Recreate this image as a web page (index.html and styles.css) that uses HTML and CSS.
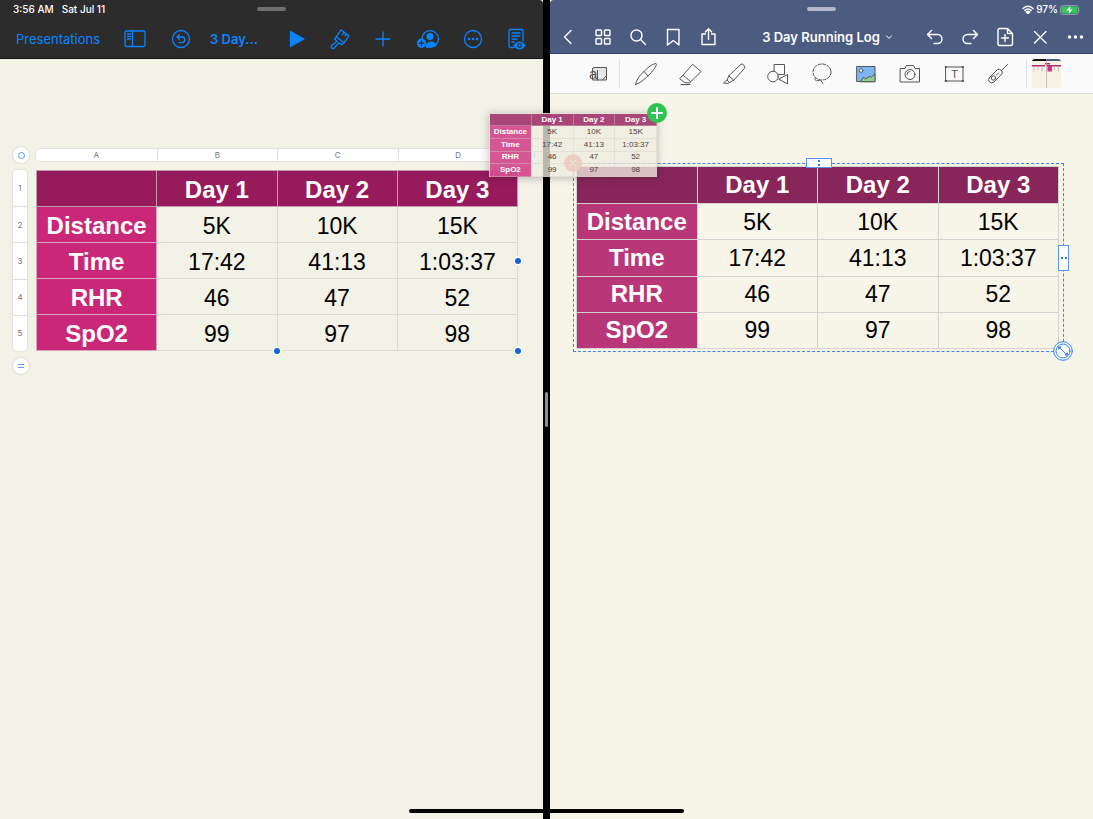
FILE: index.html
```html
<!DOCTYPE html>
<html lang="en">
<head>
    <meta charset="UTF-8">
    <meta name="viewport" content="width=device-width, initial-scale=1.0">
    <title>3 Day Running Log</title>
    <link rel="stylesheet" href="styles.css">
</head>
<body>
    <div class="screen">
        <!-- Presentation app -->
        <section class="pane keynote">
            <header class="keynote-header">
                <div class="status">
                    <span>3:56 AM</span>
                    <span>Sat Jul 11</span>
                    <i class="grabber"></i>
                </div>
                <div class="keynote-bar">
                    <div class="group">
                        <button class="label">Presentations</button>
                        <button aria-label="Sidebar"><svg viewBox="0 0 22 22"><rect x="1" y="3" width="20" height="15.500" rx="1.500"/><path d="M8.500 3v15.500M3.500 6h3M3.500 8.500h3M3.500 11h3"/></svg></button>
                        <button aria-label="Undo"><svg viewBox="0 0 22 22"><circle cx="11" cy="11" r="8.500"/><path d="M9.500 6.500L7 9l2.500 2.500M7 9h5a2.800 2.800 0 0 1 0 5.600H9"/></svg></button>
                    </div>
                    <button class="label doc-name">3 Day...</button>
                    <div class="group tools">
                        <button aria-label="Play"><svg viewBox="0 0 22 22"><path class="solid" d="M5.500 3.500v15L19 11z"/></svg></button>
                        <button aria-label="Format"><svg viewBox="0 0 22 22"><path d="M12 1.800l7.800 6-4.800 7-7.800-6zM7.200 8.800l-1.700 2 2.500 2.500-5.300 4.200a1.700 1.700 0 0 0 2.500 2.500l4.800-5.300 2.700 2 2.300-1.900M15 4.200l-1.800 2.500M17.300 6l-1.300 1.800"/></svg></button>
                        <button aria-label="Insert"><svg viewBox="0 0 22 22"><path d="M10 4v14M3 11h14"/></svg></button>
                        <button aria-label="Collaborate"><svg viewBox="0 0 22 22"><path d="M5 10.500a8.200 8.200 0 1 1 9 8.500H9.500"/><circle class="solid" cx="13" cy="8.500" r="2.900"/><path class="solid" d="M9.500 18.500c-1-5 9-6 9.500-1.200-2 1.600-5 2-9.500 1.200z"/><circle class="solid" cx="4.500" cy="15.200" r="4"/><path class="cut" d="M4.500 13v4.400M2.300 15.200h4.400"/></svg></button>
                        <button aria-label="More"><svg viewBox="0 0 22 22"><circle cx="12" cy="11" r="8.500"/><circle class="solid" cx="8" cy="11" r=".7"/><circle class="solid" cx="12" cy="11" r=".7"/><circle class="solid" cx="16" cy="11" r=".7"/></svg></button>
                        <button aria-label="Presenter notes"><svg viewBox="0 0 22 22"><path d="M9 19.500H5.500A1.500 1.500 0 0 1 4 18V3a1.500 1.500 0 0 1 1.500-1.500h11A1.500 1.500 0 0 1 18 3v10M7 5h8M7 8h8M7 11h5M7 14h2"/><path class="solid" d="M9 17.500q5-6.500 11 0-5.500 6.500-11 0z"/><circle class="cut" cx="14.500" cy="17.500" r="1.800"/></svg></button>
                    </div>
                </div>
            </header>
            <main class="slide">
                <button class="knob" aria-label="Select table"><i class="ring"></i></button>
                <div class="col-bar"><span>A</span><span>B</span><span>C</span><span>D</span></div>
                <button class="knob" aria-label="Add column"><i class="bars"></i></button>
                <div class="row-bar"><span>1</span><span>2</span><span>3</span><span>4</span><span>5</span></div>
                <div class="table-wrap">
                    <table class="log log-live">
                        <thead>
                            <tr><th></th><th>Day 1</th><th>Day 2</th><th>Day 3</th></tr>
                        </thead>
                        <tbody>
                            <tr><th>Distance</th><td>5K</td><td>10K</td><td>15K</td></tr>
                            <tr><th>Time</th><td>17:42</td><td>41:13</td><td>1:03:37</td></tr>
                            <tr><th>RHR</th><td>46</td><td>47</td><td>52</td></tr>
                            <tr><th>SpO2</th><td>99</td><td>97</td><td>98</td></tr>
                        </tbody>
                    </table>
                    <i class="dot dot-right"></i>
                    <i class="dot dot-bottom"></i>
                    <i class="dot dot-corner"></i>
                </div>
                <button class="knob knob-end" aria-label="Add row"><i class="bars bars-row"></i></button>
            </main>
        </section>

        <div class="divider"><i></i></div>

        <!-- Notes app -->
        <section class="pane notes">
            <header class="notes-header">
                <div class="status">
                    <i class="grabber"></i>
                    <div class="battery">
                        <svg class="wifi" viewBox="0 0 12 9"><path d="M1 3.500q5-4.500 10 0M2.800 5.400q3.200-2.800 6.400 0"/><path class="solid" d="M4.300 6.900q1.700-1.400 3.400 0L6 8.600z"/></svg>
                        <span>97%</span>
                        <svg class="cell" viewBox="0 0 21 10"><rect x=".5" y=".5" width="18" height="9" rx="2.500" fill="none" stroke="#8d97ae"/><rect x="1.500" y="1.500" width="16" height="7" rx="1.500" fill="#35c759"/><path d="M19.500 3.500q1.500 1.500 0 3z" fill="#8d97ae"/><path d="M10.500 1L6.500 5.500h2.700L8.500 9l4-4.600H9.800z" fill="#fff"/></svg>
                    </div>
                </div>
                <div class="notes-bar">
                    <div class="group">
                        <button aria-label="Back"><svg viewBox="0 0 20 20"><path d="M13 3.500L6.500 10l6.500 6.500"/></svg></button>
                        <button aria-label="Thumbnails"><svg viewBox="0 0 20 20"><rect x="3" y="3" width="5.500" height="5.500" rx=".8"/><rect x="11.500" y="3" width="5.500" height="5.500" rx=".8"/><rect x="3" y="11.500" width="5.500" height="5.500" rx=".8"/><rect x="11.500" y="11.500" width="5.500" height="5.500" rx=".8"/></svg></button>
                        <button aria-label="Search"><svg viewBox="0 0 20 20"><circle cx="8.500" cy="8.500" r="5.500"/><path d="M12.500 12.500l5 5"/></svg></button>
                        <button aria-label="Bookmark"><svg viewBox="0 0 20 20"><path d="M4.500 2.500h11.500v15.500l-5.700-4.500L4.500 18z"/></svg></button>
                        <button aria-label="Share"><svg viewBox="0 0 20 20"><path d="M7.500 7H4v10.500h13V7h-3.500M10.500 12.500V2M7.300 5l3.200-3.200L13.700 5"/></svg></button>
                    </div>
                    <button class="note-title">3 Day Running Log <svg viewBox="0 0 8 8"><path d="M1.500 3L4 5.300 6.500 3"/></svg></button>
                    <div class="group">
                        <button aria-label="Undo"><svg viewBox="0 0 20 20"><path d="M6.500 3.500L2.500 7.500l4 4M2.500 7.500h10a4.500 4.500 0 0 1 0 9H9"/></svg></button>
                        <button aria-label="Redo"><svg viewBox="0 0 20 20"><path d="M13.500 3.500l4 4-4 4M17.500 7.500h-10a4.500 4.500 0 0 0 0 9H11"/></svg></button>
                        <button aria-label="Add page"><svg viewBox="0 0 20 20"><path d="M4.500 1.500h8l5 5V17a1.500 1.500 0 0 1-1.500 1.500H4.500A1.500 1.500 0 0 1 3 17V3a1.500 1.500 0 0 1 1.500-1.500zM12.500 1.500v5h5M10 7.500v7M6.500 11h7"/></svg></button>
                        <button aria-label="Close editing"><svg viewBox="0 0 20 20"><path d="M4.500 4.500l11.500 11.500M16 4.500l-5 5M9.500 11l-5 5"/></svg></button>
                        <button aria-label="More"><svg viewBox="0 0 20 20"><circle class="solid" cx="4.500" cy="10" r="1"/><circle class="solid" cx="10.500" cy="10" r="1"/><circle class="solid" cx="16.500" cy="10" r="1"/></svg></button>
                    </div>
                </div>
            </header>
            <div class="toolbar">
                <button aria-label="Zoom window"><svg viewBox="0 0 24 24"><path fill="#e6e6e8" d="M4.500 11V7a1.500 1.500 0 0 1 1.500-1.500h12.500V18H4.500v-1zM18.500 13.500l-4 4.500"/><path d="M9.500 8.500V18"/><text class="glyph" x="1" y="17">a</text></svg></button>
                <i class="rule"></i>
                <div class="tool-list">
                    <button aria-label="Pen"><svg viewBox="0 0 24 24"><path d="M1.500 22.500c1-5 4-9 8.500-13 4-4 8-7.500 12-8 1.500 1.500-2 6-6.500 11-4.500 4.500-9 8.500-14 10zM10 9.500l4 4.500"/></svg></button>
                    <button aria-label="Eraser"><svg viewBox="0 0 24 24"><path d="M15 2.500l8 7L11.500 21l-5-.5L2 17zM5.500 13.500l7 6M3 22.500h9"/></svg></button>
                    <button aria-label="Highlighter"><svg viewBox="0 0 24 24"><path d="M7 13.500L19 2.300q1.500-.8 3 1t.5 3L12 18zM7 13.500l-2 4.500 2.500 2.500L12 18M5 18l-3.500 3 4.500.5 1.500-1"/></svg></button>
                    <button aria-label="Shapes"><svg viewBox="0 0 24 24"><rect x="8.500" y="2.500" width="10" height="10"/><circle cx="7" cy="14.500" r="5.300" fill="#fafafa"/><path fill="#fafafa" d="M13 17l8.500-4.500v9z"/></svg></button>
                    <button aria-label="Lasso"><svg viewBox="0 0 24 24"><ellipse cx="12" cy="10" rx="9" ry="8" stroke-dasharray="3 1.500"/><path d="M5 16q-1 3 3 2.500t5 3.500" stroke-dasharray="3 1"/></svg></button>
                    <button aria-label="Image"><svg viewBox="0 0 24 24"><rect x="3" y="4.500" width="18" height="15" fill="#7fb5f7"/><path fill="#93cf92" d="M6.500 19.500l3-4.500 2 2 3.500-2.500 2.500.500L21 12v7.500z"/><circle cx="7" cy="8.500" r="1.800" fill="#fff"/></svg></button>
                    <button aria-label="Camera"><svg viewBox="0 0 24 24"><path d="M2.500 6.500H7l1.500-3h7l1.500 3h4.500V20h-19z"/><circle cx="12" cy="12.500" r="5"/><path d="M9 12.500a3 3 0 0 1 3-3"/></svg></button>
                    <button aria-label="Text"><svg viewBox="0 0 24 24"><rect x="4" y="5" width="17" height="14"/><path class="solid" d="M3.500 4.500h1v1h-1zM20.500 4.500h1v1h-1zM3.500 18.500h1v1h-1zM20.500 18.500h1v1h-1z"/><text class="glyph glyph-t" x="12.500" y="16">T</text></svg></button>
                    <button aria-label="Laser pointer"><svg viewBox="0 0 24 24"><path d="M3.500 15.500L11.500 7.500q2-1 3.700.7t.8 3.600L8 20Q5.500 22 3.500 20t0-4.500zM15.500 8.500L21.500 2.500"/><circle cx="7.500" cy="16" r="2.200"/><path d="M10.500 13l2-2"/></svg></button>
                </div>
                <i class="rule rule-end"></i>
                <button class="thumb" aria-label="Recent image"><svg viewBox="0 0 29 29"><path fill="#f5f2e3" d="M0 0h29v29H0z"/><path fill="#111" d="M0 0h14.500v2H0z"/><path fill="#4c5b80" d="M14.500 0H29v2H14.500z"/><path fill="#b52b70" d="M0 6h13v1.500H0zM15 6h14v1.500H15zM13 4h5v1.500h-5z"/><path fill="#d62c83" d="M15.500 7H20v5.500h-4.500z"/><path stroke="#aaa" stroke-width=".7" d="M14.500 2v27M2 8v4M6 8v3M10 8v4M22.500 8v3M26.500 8v4"/></svg></button>
            </div>
            <main class="page">
                <div class="selection">
                    <table class="log log-image">
                        <thead>
                            <tr><th></th><th>Day 1</th><th>Day 2</th><th>Day 3</th></tr>
                        </thead>
                        <tbody>
                            <tr><th>Distance</th><td>5K</td><td>10K</td><td>15K</td></tr>
                            <tr><th>Time</th><td>17:42</td><td>41:13</td><td>1:03:37</td></tr>
                            <tr><th>RHR</th><td>46</td><td>47</td><td>52</td></tr>
                            <tr><th>SpO2</th><td>99</td><td>97</td><td>98</td></tr>
                        </tbody>
                    </table>
                    <i class="stretch stretch-top"></i>
                    <i class="stretch stretch-right"></i>
                    <svg class="resize" viewBox="0 0 20 20"><circle cx="10" cy="10" r="9.300"/><circle cx="10" cy="10" r="7"/><path d="M7.500 7.500l5 5"/><path class="solid" d="M6 6h2L6 8zM14 14h-2l2-2z"/></svg>
                </div>
            </main>

            <!-- Table being dragged across -->
            <svg class="delete" viewBox="0 0 18 18"><circle cx="9" cy="9" r="9"/><path d="M6.500 6.500l5 5M11.500 6.500l-5 5"/></svg>
            <div class="drag">
                <table class="log log-drag">
                    <thead>
                        <tr><th></th><th>Day 1</th><th>Day 2</th><th>Day 3</th></tr>
                    </thead>
                    <tbody>
                        <tr><th>Distance</th><td>5K</td><td>10K</td><td>15K</td></tr>
                        <tr><th>Time</th><td>17:42</td><td>41:13</td><td>1:03:37</td></tr>
                        <tr><th>RHR</th><td>46</td><td>47</td><td>52</td></tr>
                        <tr><th>SpO2</th><td>99</td><td>97</td><td>98</td></tr>
                    </tbody>
                </table>
                <svg class="add" viewBox="0 0 20 20"><circle cx="10" cy="10" r="10"/><path d="M10 5v10M5 10h10"/></svg>
            </div>
        </section>
        <i class="home"></i>
    </div>
</body>
</html>
```

FILE: styles.css
```css
* {
    box-sizing: border-box;
}
body {
    margin: 0;
    font-family: Inter, "Liberation Sans", sans-serif;
    background: #000;
}
.screen {
    position: relative;
    display: grid;
    grid-template-columns: 1fr 7px 1fr;
    min-height: 100vh;
}
.pane {
    position: relative;
    display: flex;
    flex-direction: column;
}
.keynote {
    background: #f3f2e7;
}
.notes {
    background: #f7f4e8;
    z-index: 1;
}
button {
    padding: 0;
    border: none;
    background: none;
    color: inherit;
    font-family: inherit;
    cursor: pointer;
}
svg {
    display: block;
    fill: none;
    stroke: currentColor;
    stroke-linecap: round;
    stroke-linejoin: round;
}
.solid {
    fill: currentColor;
}
.group {
    display: flex;
    align-items: center;
}

/* status line */
.status {
    position: relative;
    display: flex;
    gap: 8px;
    height: 19px;
    line-height: 19px;
    font-size: 10px;
    font-weight: 500;
    color: #fff;
}
.grabber {
    position: absolute;
    top: 7px;
    left: 50%;
    width: 29px;
    height: 4px;
    margin-left: -15px;
    border-radius: 2px;
    background: #707070;
}

/* presentation app */
.keynote-header {
    height: 59px;
    background: #2c2c2c;
    border-bottom: 1px solid #111;
    border-top-right-radius: 4px;
    color: #0a84ff;
}
.keynote-header .status {
    padding-left: 13px;
}
.keynote-bar {
    display: flex;
    align-items: center;
    height: 40px;
    padding: 0 16px;
}
.keynote-bar .group {
    gap: 24px;
}
.keynote-bar .tools {
    gap: 22px;
    margin-left: auto;
}
.keynote-bar svg {
    width: 22px;
    height: 22px;
    stroke-width: 1.3;
}
.keynote-bar .cut {
    stroke: #2c2c2c;
}
.label {
    font-size: 13px;
}
.doc-name {
    margin-left: 18px;
    font-weight: 600;
}
.slide {
    display: grid;
    grid-template-columns: 16px 1fr 16px;
    gap: 7px;
    align-items: center;
    padding: 88px 2px 0 13px;
}
.knob {
    display: flex;
    align-items: center;
    justify-content: center;
    width: 16px;
    height: 16px;
    border-radius: 50%;
    background: #fff;
    box-shadow: 0 0 1px 1px #dcdcd6;
}
.knob-end {
    grid-column: 1;
}
.ring {
    width: 7px;
    height: 7px;
    border: 1px solid #5b9bf5;
    border-radius: 50%;
}
.bars {
    width: 4px;
    height: 6px;
    border: solid #5b9bf5;
    border-width: 0 1px;
}
.bars-row {
    width: 6px;
    height: 4px;
    border-width: 1px 0;
}
.col-bar,
.row-bar {
    display: grid;
    border-radius: 4px;
    background: #fff;
    box-shadow: 0 0 1px 1px #e2e1d8;
    color: #777;
    font-size: 8px;
}
.col-bar {
    grid-template-columns: repeat(4, 1fr);
    height: 12px;
    line-height: 12px;
    text-align: center;
}
.row-bar {
    grid-template-rows: repeat(5, 1fr);
    width: 14px;
    height: 100%;
}
.row-bar span {
    display: flex;
    align-items: center;
    justify-content: center;
}
.col-bar span + span {
    border-left: 1px solid #e0e0dc;
}
.row-bar span + span {
    border-top: 1px solid #e0e0dc;
}
.table-wrap {
    position: relative;
    grid-column: 2 / 3;
}
.dot {
    position: absolute;
    width: 10px;
    height: 10px;
    border: 2px solid #fff;
    border-radius: 50%;
    background: #1463dd;
    box-shadow: 0 0 1px #bbb;
}
.dot-right {
    right: -5px;
    top: calc(50% - 5px);
}
.dot-bottom {
    left: calc(50% - 5px);
    bottom: -5px;
}
.dot-corner {
    right: -5px;
    bottom: -5px;
}

/* running log table */
.log {
    width: 100%;
    border-collapse: collapse;
    table-layout: fixed;
    font-family: "Liberation Sans", Arial, sans-serif;
    font-size: 24px;
    line-height: 28px;
    text-align: center;
    color: #000;
}
.log th,
.log td {
    height: 36px;
    padding: 0;
    border: 1px solid #dddcd4;
}
.log td {
    font-size: 23px;
}
.log th {
    color: #fff;
    font-weight: bold;
}
.log-live th,
.log-live td {
    padding-top: 2px;
}
.log-live thead th {
    background: #971a5c;
    border-color: #c49bac;
}
.log-live tbody th {
    background: #ca2779;
    border-color: #dca3bd;
}
.log-image {
    height: 183px;
}
.log-image th,
.log-image td {
    border-color: #d3d3cf;
}
.log-image thead th {
    height: 37px;
    background: #88255b;
}
.log-image tbody th {
    background: #b93778;
}

.divider {
    display: flex;
    align-items: center;
    justify-content: center;
    background: #000;
}
.divider i {
    width: 3px;
    height: 35px;
    border-radius: 2px;
    background: #8e8e93;
}

/* notes app */
.notes-header {
    height: 54px;
    background: #4c5b80;
    border-bottom: 1px solid #2f4574;
    border-top-left-radius: 4px;
    color: #fff;
}
.notes-header .grabber {
    background: #b3b9c8;
}
.battery {
    display: flex;
    align-items: center;
    gap: 2px;
    margin-left: auto;
    padding-right: 12px;
}
.wifi {
    width: 12px;
    height: 9px;
    stroke-width: 1.4;
}
.cell {
    width: 21px;
    height: 10px;
    stroke: none;
}
.notes-bar {
    display: flex;
    align-items: center;
    justify-content: space-between;
    height: 35px;
    padding: 0 8px;
}
.notes-bar .group {
    gap: 15px;
}
.notes-bar .group svg {
    width: 20px;
    height: 20px;
    stroke-width: 1.4;
}
.note-title {
    display: flex;
    align-items: center;
    gap: 5px;
    padding-left: 12px;
    font-size: 13px;
    font-weight: 600;
}
.note-title svg {
    width: 8px;
    height: 8px;
}
.toolbar {
    display: flex;
    align-items: center;
    justify-content: center;
    height: 40px;
    padding-left: 5px;
    background: #fafafa;
    border-bottom: 1px solid #dddcd8;
    color: #555;
}
.toolbar svg {
    width: 24px;
    height: 24px;
    stroke-width: 1;
}
.tool-list {
    display: flex;
    gap: 20px;
}
.rule {
    width: 1px;
    height: 29px;
    margin: 0 14px 0 7px;
    background: #e2e2e4;
}
.rule-end {
    margin: 0 5px 0 16px;
}
.toolbar .thumb svg {
    width: 29px;
    height: 29px;
    border-radius: 3px;
    stroke: none;
}
.glyph {
    fill: currentColor;
    stroke: none;
    font-family: "Liberation Sans", sans-serif;
    font-size: 15px;
}
.glyph-t {
    font-size: 11px;
    text-anchor: middle;
}
.page {
    padding: 69px 29px 0 23px;
}
.selection {
    position: relative;
    padding: 2px 4px 2px 2px;
    border: 1px dashed #3f86f5;
}
.stretch {
    position: absolute;
    display: flex;
    align-items: center;
    justify-content: center;
    border: 1px solid #5796f3;
    background: #fff;
}
.stretch::before,
.stretch::after {
    content: "";
    width: 2px;
    height: 2px;
    background: #2f7ff0;
}
.stretch-top {
    top: -6px;
    left: calc(50% - 13px);
    flex-direction: column;
    gap: 2px;
    width: 26px;
    height: 10px;
}
.stretch-right {
    top: calc(50% - 13px);
    right: -6px;
    gap: 2px;
    width: 11px;
    height: 26px;
}
.resize {
    position: absolute;
    right: -10px;
    bottom: -10px;
    width: 20px;
    height: 20px;
    fill: #fff;
    color: #2f7ff0;
}

/* drag preview */
.drag {
    position: absolute;
    top: 113px;
    left: -61px;
    width: 168px;
    background: rgba(238, 236, 223, 0.78);
    box-shadow: 0 1px 8px rgba(0, 0, 0, 0.25);
}
.log-drag {
    height: 64px;
    line-height: 10px;
    color: #444;
}
.log-drag th,
.log-drag td {
    height: 12px;
    border-color: rgba(210, 205, 200, 0.4);
    font-size: 8px;
}
.log-drag thead th {
    background: rgba(151, 26, 92, 0.8);
}
.log-drag tbody th {
    background: rgba(206, 48, 126, 0.8);
}
.add {
    position: absolute;
    top: -10px;
    right: -10px;
    width: 20px;
    height: 20px;
    fill: #2fc353;
    stroke: none;
}
.add path {
    stroke: #fff;
    stroke-width: 2;
}
.delete {
    position: absolute;
    top: 154px;
    left: 14px;
    width: 18px;
    height: 18px;
    fill: #ee6a63;
    stroke: none;
}
.delete path {
    stroke: #fff;
}
.home {
    position: absolute;
    right: 0;
    bottom: 6px;
    left: 0;
    z-index: 2;
    width: 275px;
    height: 4px;
    margin: auto;
    border-radius: 2px;
    background: #000;
}
```
